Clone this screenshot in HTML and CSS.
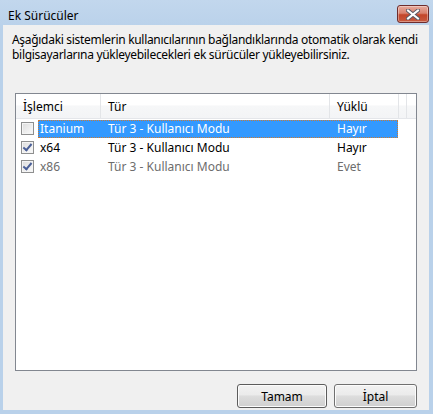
FILE: index.html
```html
<!DOCTYPE html>
<html lang="tr">
<head>
<meta charset="utf-8">
<title>Ek Sürücüler</title>
<link rel="stylesheet" href="styles.css">
</head>
<body>
<div class="window">
  <div class="titlebar">
    <span class="title">Ek Sürücüler</span>
    <button class="close" aria-label="Kapat">
      <svg width="14" height="11" viewBox="0 0 14 11">
        <path d="M2 1.5 L12 9.5 M12 1.5 L2 9.5" stroke="#5a5a66" stroke-width="4" stroke-linecap="square"/>
        <path d="M2 1.5 L12 9.5 M12 1.5 L2 9.5" stroke="#ffffff" stroke-width="2" stroke-linecap="square"/>
      </svg>
    </button>
  </div>
  <div class="client">
    <p class="intro">Aşağıdaki sistemlerin kullanıcılarının bağlandıklarında otomatik olarak kendi bilgisayarlarına yükleyebilecekleri ek sürücüler yükleyebilirsiniz.</p>
    <div class="list">
      <div class="header">
        <div class="hcell c1">İşlemci</div>
        <div class="hcell c2">Tür</div>
        <div class="hcell c3">Yüklü</div>
        <div class="hcell c4"></div>
      </div>
      <div class="row">
        <span class="check"></span>
        <div class="cells selected">
          <span class="cell n">Itanium</span>
          <span class="cell t">Tür 3 - Kullanıcı Modu</span>
          <span class="cell y">Hayır</span>
        </div>
      </div>
      <div class="row">
        <span class="check checked"></span>
        <div class="cells">
          <span class="cell n">x64</span>
          <span class="cell t">Tür 3 - Kullanıcı Modu</span>
          <span class="cell y">Hayır</span>
        </div>
      </div>
      <div class="row">
        <span class="check checked"></span>
        <div class="cells dim">
          <span class="cell n">x86</span>
          <span class="cell t">Tür 3 - Kullanıcı Modu</span>
          <span class="cell y">Evet</span>
        </div>
      </div>
    </div>
    <div class="footer">
      <button class="btn default">Tamam</button>
      <button class="btn">İptal</button>
    </div>
  </div>
</div>
</body>
</html>
```
FILE: styles.css
```css
html, body {
  margin: 0;
  padding: 0;
}
body {
  width: 433px;
  height: 414px;
  overflow: hidden;
  background: #bad2ea;
  font-family: "Noto Sans", "Open Sans", sans-serif;
  font-size: 12px;
  color: #000;
}
.window {
  width: 433px;
  height: 414px;
  display: flex;
  flex-direction: column;
  background: linear-gradient(#c2d7ed, #b9d1ea 30px);
}
.titlebar {
  height: 25px;
  display: flex;
  align-items: center;
  justify-content: space-between;
  padding: 0 4px 0 8px;
  box-sizing: border-box;
}
.title {
  font-size: 12px;
  color: #000;
  margin-top: 5px;
}
.close {
  width: 32px;
  height: 18px;
  margin-top: 3px;
  border: 1px solid #6e2c2c;
  border-radius: 3px;
  background: linear-gradient(#e7a99c 0%, #d9826f 45%, #c4462b 55%, #c75a3f 100%);
  box-shadow: inset 0 0 0 1px rgba(255,255,255,0.35);
  display: flex;
  align-items: center;
  justify-content: center;
  padding: 0;
}
.client {
  flex: 1;
  margin: 0 4px 4px 3px;
  background: #f0f0f0;
  display: flex;
  flex-direction: column;
  padding: 0 12px;
}
.intro {
  margin: 7px -6px 0 -3px;
  line-height: 15px;
  height: 45px;
  letter-spacing: -0.3px;
}
.list {
  margin-top: 16px;
  height: 276px;
  border: 1px solid #828790;
  background: #fff;
}
.header {
  display: flex;
  height: 24px;
  background: linear-gradient(#ffffff 0%, #ffffff 45%, #f6f7f8 50%, #f3f4f6 100%);
  border-bottom: 1px solid #e4e6ea;
}
.hcell {
  display: flex;
  align-items: center;
  padding-left: 7px;
  border-right: 1px solid #e3e5e8;
  box-sizing: border-box;
}
.c1 { width: 85px; }
.c2 { width: 229px; }
.c3 { width: 69px; }
.c4 { width: 3px; }
.row {
  display: flex;
  align-items: center;
  height: 19px;
}
.row:first-of-type { margin-top: 1px; }
.check {
  width: 13px;
  height: 13px;
  box-sizing: border-box;
  margin-left: 5px;
  border: 1px solid #8e8f8f;
  background: linear-gradient(135deg, #dcdcdc, #fbfbfb);
  box-shadow: inset 0 0 0 1px #f4f4f4;
  position: relative;
}
.check.checked::after {
  content: "";
  position: absolute;
  left: 3px;
  top: 0px;
  width: 3px;
  height: 7px;
  border-right: 2px solid #4a5f97;
  border-bottom: 2px solid #4a5f97;
  transform: rotate(40deg);
}
.cells {
  display: flex;
  align-items: center;
  height: 18px;
  width: 360px;
  margin-left: 4px;
  box-sizing: border-box;
  border: 1px solid transparent;
}
.cells.selected {
  background: #3399ff;
  color: #fff;
  border: 1px dotted #cc7a33;
}
.cells.dim { color: #6d6d6d; }
.cell { white-space: nowrap; }
.n { width: 68px; padding-left: 1px; }
.t { width: 229px; }
.y { flex: 1; }
.footer {
  flex: 1;
  display: flex;
  justify-content: flex-end;
  align-items: flex-start;
  gap: 7px;
  padding-top: 13px;
}
.btn {
  width: 90px;
  height: 24px;
  font-family: inherit;
  font-size: 12px;
  color: #000;
  border: 1px solid #707070;
  border-radius: 3px;
  background: linear-gradient(#f2f2f2 0%, #ebebeb 45%, #dddddd 50%, #cfcfcf 100%);
  box-shadow: inset 0 0 0 1px #fcfcfc;
  padding: 0;
}
.btn + .btn { width: 83px; }
.btn.default { border-color: #5c5c5c; }
```
